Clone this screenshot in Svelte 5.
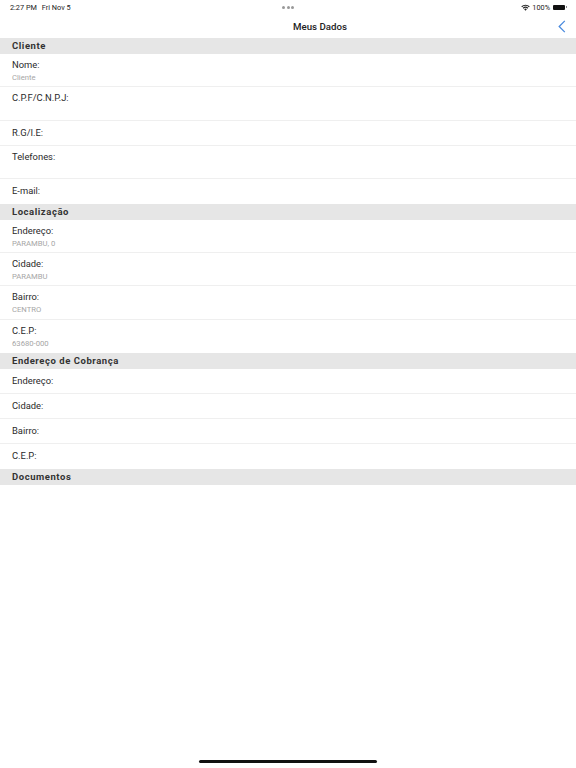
<script>
	const sections = [
		{
			title: 'Cliente',
			rows: [
				{ label: 'Nome:', value: 'Cliente' },
				{ label: 'C.P.F/C.N.P.J:', value: '', tall: true },
				{ label: 'R.G/I.E:', value: '' },
				{ label: 'Telefones:', value: '', tall: true },
				{ label: 'E-mail:', value: '' }
			]
		},
		{
			title: 'Localização',
			rows: [
				{ label: 'Endereço:', value: 'PARAMBU, 0' },
				{ label: 'Cidade:', value: 'PARAMBU' },
				{ label: 'Bairro:', value: 'CENTRO' },
				{ label: 'C.E.P:', value: '63680-000' }
			]
		},
		{
			title: 'Endereço de Cobrança',
			rows: [
				{ label: 'Endereço:', value: '' },
				{ label: 'Cidade:', value: '' },
				{ label: 'Bairro:', value: '' },
				{ label: 'C.E.P:', value: '' }
			]
		},
		{ title: 'Documentos', rows: [] }
	];
</script>

<div class="screen">
	<div class="status">
		<span class="time">2:27 PM</span>
		<span class="date">Fri Nov 5</span>
		<span class="dots"><i></i><i></i><i></i></span>
		<span class="right">
			<svg class="wifi" width="9" height="7" viewBox="0 0 10 8">
				<path d="M0.2 2.7A6.8 6.8 0 0 1 9.8 2.7L8.9 3.7A5.5 5.5 0 0 0 1.1 3.7Z" fill="#222" />
				<path d="M1.9 4.4A4.4 4.4 0 0 1 8.1 4.4L7.2 5.3A3.1 3.1 0 0 0 2.8 5.3Z" fill="#222" />
				<path d="M3.5 6A2.1 2.1 0 0 1 6.5 6L5 7.6Z" fill="#222" />
			</svg>
			<span class="pct">100%</span>
			<span class="battery"></span>
		</span>
	</div>

	<nav class="nav">
		<span class="title">Meus Dados</span>
		<svg class="back" width="8" height="13" viewBox="0 0 8 13">
			<path d="M6.8 0.9L1.2 6.5L6.8 12.1" fill="none" stroke="#4a8ade" stroke-width="1.3" />
		</svg>
	</nav>

	{#each sections as section}
		<h2>{section.title}</h2>
		{#each section.rows as row, i}
			<div class="row" class:stacked={row.value || row.tall} class:last={i === section.rows.length - 1}>
				<div class="label">{row.label}</div>
				{#if row.value}
					<div class="value">{row.value}</div>
				{/if}
			</div>
		{/each}
	{/each}

	<div class="home"></div>
</div>

<style>
	:global(body) {
		margin: 0;
		background: #fff;
	}

	.screen {
		position: relative;
		width: 576px;
		height: 768px;
		overflow: hidden;
		background: #fff;
		font-family: Roboto, "Liberation Sans", sans-serif;
		color: #222;
	}

	.status {
		position: relative;
		display: flex;
		align-items: center;
		height: 14px;
		padding: 0 10px;
		font-size: 7.3px;
		color: #222;
	}

	.date {
		margin-left: 5px;
	}

	.dots {
		position: absolute;
		left: 282px;
		top: 6px;
		display: flex;
		gap: 1.5px;
	}

	.dots i {
		width: 3px;
		height: 3px;
		border-radius: 50%;
		background: #999;
	}

	.right {
		margin-left: auto;
		display: flex;
		align-items: center;
		gap: 2px;
	}

	.battery {
		position: relative;
		width: 12px;
		height: 5px;
		margin-left: 1px;
		margin-right: 1px;
		border-radius: 1px;
		background: #111;
	}

	.battery::after {
		content: "";
		position: absolute;
		left: 12.5px;
		top: 1.5px;
		width: 1px;
		height: 2px;
		background: #888;
	}

	.nav {
		display: flex;
		align-items: center;
		justify-content: center;
		position: relative;
		height: 24px;
	}

	.title {
		margin-left: 64px;
		font-size: 9.7px;
		font-weight: 500;
		color: #222;
	}

	.back {
		position: absolute;
		left: 558px;
		top: 6px;
	}

	h2 {
		margin: 0;
		height: 16px;
		padding-left: 12px;
		background: #e6e6e6;
		font-size: 9.5px;
		font-weight: 700;
		line-height: 16px;
		letter-spacing: 0.55px;
		color: #333;
	}

	.row {
		box-sizing: border-box;
		height: 25px;
		padding: 5px 12px 0;
		border-bottom: 1px solid #efefef;
	}

	.row.stacked {
		height: 33.3px;
		padding-top: 4px;
	}

	.row.last {
		border-bottom: 0;
	}

	.label {
		font-size: 9.4px;
		line-height: 14px;
		color: #2a2a2a;
	}

	.value {
		margin-top: 1px;
		font-size: 7.7px;
		line-height: 10px;
		color: #a6a6a6;
	}

	.home {
		position: absolute;
		left: 199px;
		top: 760px;
		width: 178px;
		height: 3px;
		border-radius: 2px;
		background: #111;
	}
</style>
